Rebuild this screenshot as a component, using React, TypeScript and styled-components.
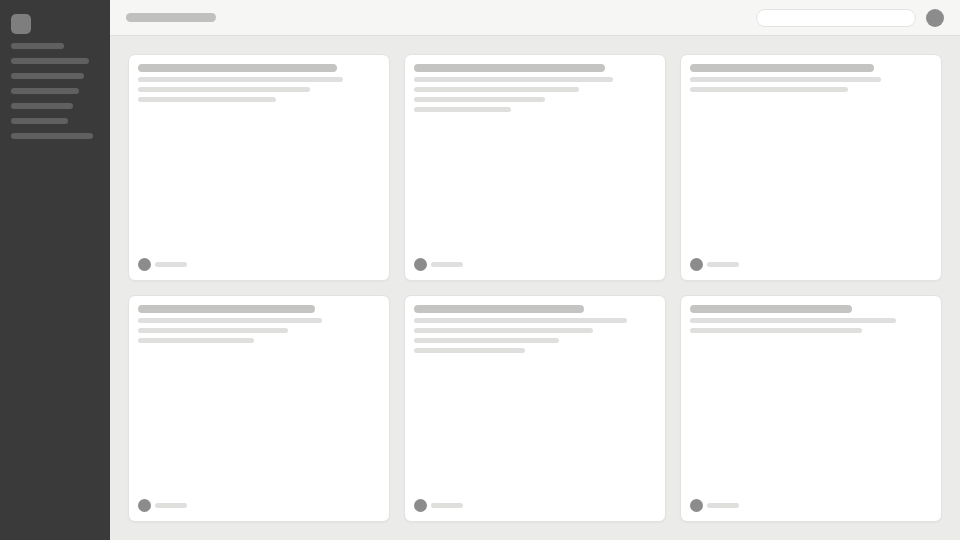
import React from "react";
import styled, { createGlobalStyle } from "styled-components";

const Global = createGlobalStyle`
  html, body { margin: 0; padding: 0; width: 960px; height: 540px; overflow: hidden; background: #ebebe9; font-family: "Liberation Sans", sans-serif; }
  #root { width: 960px; height: 540px; }
`;

const Shell = styled.div`
  display: flex;
  width: 960px;
  height: 540px;
`;

const Sidebar = styled.aside`
  width: 110px;
  flex: none;
  box-sizing: border-box;
  padding: 14px 11px 0;
  background: #3a3a3a;
  display: flex;
  flex-direction: column;
  align-items: flex-start;
`;

const Logo = styled.div`
  width: 20px;
  height: 20px;
  border-radius: 5px;
  background: #7e7e7e;
  margin-bottom: 9px;
`;

const NavBar = styled.div<{ $w: number }>`
  width: ${(p) => p.$w}px;
  height: 6px;
  border-radius: 3px;
  background: #606060;
  margin-bottom: 9px;
`;

const Main = styled.div`
  flex: 1;
  display: flex;
  flex-direction: column;
  min-width: 0;
`;

const Header = styled.header`
  height: 36px;
  flex: none;
  box-sizing: border-box;
  padding: 0 16px;
  background: #f6f6f4;
  border-bottom: 1px solid #dededc;
  display: flex;
  align-items: center;
  justify-content: space-between;
`;

const HeaderTitle = styled.div`
  width: 90px;
  height: 9px;
  border-radius: 4.5px;
  background: #c0c0be;
`;

const HeaderRight = styled.div`
  display: flex;
  align-items: center;
  gap: 10px;
`;

const Search = styled.div`
  width: 160px;
  height: 18px;
  box-sizing: border-box;
  border: 1px solid #e4e4e2;
  border-radius: 9px;
  background: #ffffff;
`;

const UserAvatar = styled.div`
  width: 18px;
  height: 18px;
  border-radius: 50%;
  background: #8c8c8c;
`;

const Grid = styled.main`
  flex: 1;
  box-sizing: border-box;
  padding: 18px;
  display: grid;
  grid-template-columns: repeat(3, 1fr);
  grid-template-rows: repeat(2, 1fr);
  gap: 14px;
  background: #ebebe9;
`;

const Card = styled.section`
  box-sizing: border-box;
  padding: 9px;
  background: #ffffff;
  border: 1px solid #e2e2e0;
  border-radius: 7px;
  box-shadow: 0 1px 2px rgba(0, 0, 0, 0.04);
  display: flex;
  flex-direction: column;
`;

const CardTitle = styled.div<{ $w: number }>`
  width: ${(p) => p.$w}px;
  height: 8px;
  border-radius: 4px;
  background: #c4c4c2;
  margin-bottom: 5px;
`;

const CardLine = styled.div<{ $w: number }>`
  width: ${(p) => p.$w}px;
  height: 5px;
  border-radius: 2.5px;
  background: #dfdfdd;
  margin-bottom: 5px;
`;

const CardFooter = styled.div`
  margin-top: auto;
  display: flex;
  align-items: center;
  gap: 4px;
`;

const CardAvatar = styled.div`
  width: 13px;
  height: 13px;
  border-radius: 50%;
  background: #8c8c8c;
`;

const CardMeta = styled.div`
  width: 32px;
  height: 5px;
  border-radius: 2.5px;
  background: #dfdfdd;
`;

const nav = [53, 78, 73, 68, 62, 57, 82];

const cards = [
  { title: 199, lines: [205, 172, 138] },
  { title: 191, lines: [199, 165, 131, 97] },
  { title: 184, lines: [191, 158] },
  { title: 177, lines: [184, 150, 116] },
  { title: 170, lines: [213, 179, 145, 111] },
  { title: 162, lines: [206, 172] },
];

export default function App() {
  return (
    <Shell>
      <Global />
      <Sidebar>
        <Logo />
        {nav.map((w, i) => (
          <NavBar key={i} $w={w} />
        ))}
      </Sidebar>
      <Main>
        <Header>
          <HeaderTitle />
          <HeaderRight>
            <Search />
            <UserAvatar />
          </HeaderRight>
        </Header>
        <Grid>
          {cards.map((c, i) => (
            <Card key={i}>
              <CardTitle $w={c.title} />
              {c.lines.map((w, j) => (
                <CardLine key={j} $w={w} />
              ))}
              <CardFooter>
                <CardAvatar />
                <CardMeta />
              </CardFooter>
            </Card>
          ))}
        </Grid>
      </Main>
    </Shell>
  );
}
